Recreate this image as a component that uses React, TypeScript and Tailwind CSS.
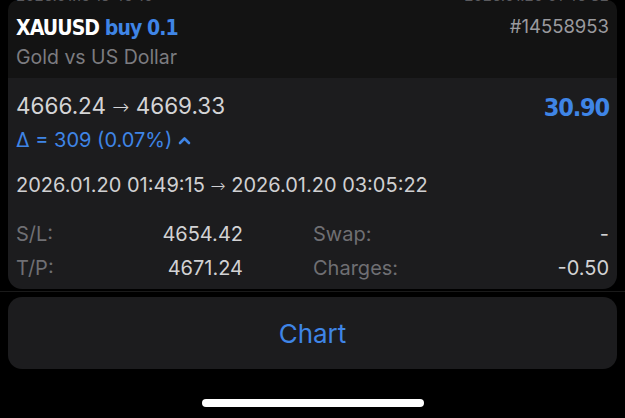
import React from "react";

const blue = "text-[#3f85e6]";

const Arrow = () => <span className="font-['DejaVu_Sans',sans-serif] font-light text-[0.9em]">→</span>;

const Row = ({ a, b, c, d }: { a: string; b: string; c: string; d: string }) => (
  <div className="flex items-center h-[34px] text-[20px]">
    <span className="w-[130px] text-[#6f6f73]">{a}</span>
    <span className="w-[97px] text-right text-[#d2d2d4]">{b}</span>
    <span className="ml-[70px] flex-1 text-[#6f6f73]">{c}</span>
    <span className="text-[#d2d2d4]">{d}</span>
  </div>
);

const App = () => {
  return (
    <div className="w-[625px] h-[418px] bg-black flex flex-col overflow-hidden font-['Inter','Liberation_Sans',sans-serif]">
      <div className="mx-2 rounded-b-[14px] rounded-t-[10px] overflow-hidden">
        <div className="bg-[#131313] h-[78px] px-2 relative">
          <div className="h-[4px] overflow-hidden flex justify-between text-[15px] text-[#5a5a5e] leading-[16px]">
            <span className="-mt-[12px]">2026.01.19 15:49:10</span>
            <span className="-mt-[12px]">2026.01.20 01:46:32</span>
          </div>
          <div className="flex justify-between items-start pt-[10px]">
            <div className="font-['DejaVu_Sans_Condensed',sans-serif] font-bold text-[21px] leading-[28px] tracking-[-0.9px]">
              <span className="text-white">XAUUSD</span>{" "}
              <span className={blue}>buy 0.1</span>
            </div>
            <span className="text-[18.5px] leading-[24px] text-[#9a9a9e]">#14558953</span>
          </div>
          <div className="text-[19.5px] leading-[26px] text-[#7c7c80] mt-[2px]">Gold vs US Dollar</div>
        </div>
        <div className="bg-[#1c1c1e] px-2 pt-[14px] pb-[4px]">
          <div className="flex justify-between items-start">
            <span className="text-[22.5px] leading-[28px] text-[#d4d4d6]">
              4666.24 <Arrow /> 4669.33
            </span>
            <span className={`font-['DejaVu_Sans_Condensed',sans-serif] font-bold text-[25px] leading-[32px] tracking-[-1.2px] ${blue}`}>
              30.90
            </span>
          </div>
          <div className={`flex items-center gap-[6px] text-[20px] leading-[28px] ${blue} mt-[2px]`}>
            <span>Δ = 309 (0.07%)</span>
            <svg width="13" height="9" viewBox="0 0 13 9" fill="none">
              <path d="M2 7 L6.5 2.5 L11 7" stroke="#3f85e6" strokeWidth="2.6" strokeLinecap="round" strokeLinejoin="round" />
            </svg>
          </div>
          <div className="text-[20px] leading-[28px] text-[#d0d0d2] mt-[17px]">
            2026.01.20 01:49:15 <Arrow /> 2026.01.20 03:05:22
          </div>
          <div className="mt-[17px]">
            <Row a="S/L:" b="4654.42" c="Swap:" d="-" />
            <Row a="T/P:" b="4671.24" c="Charges:" d="-0.50" />
          </div>
        </div>
      </div>
      <div className="h-px bg-[#1a1a1a] mt-[2px]" />
      <div className="mx-2 mt-[5px] h-[72px] rounded-[14px] bg-[#1c1c1e] flex items-center justify-center">
        <span className={`text-[26px] ${blue}`}>Chart</span>
      </div>
      <div className="flex justify-center mt-[30px]">
        <div className="w-[222px] h-[8px] rounded-full bg-white" />
      </div>
    </div>
  );
};

export default App;
